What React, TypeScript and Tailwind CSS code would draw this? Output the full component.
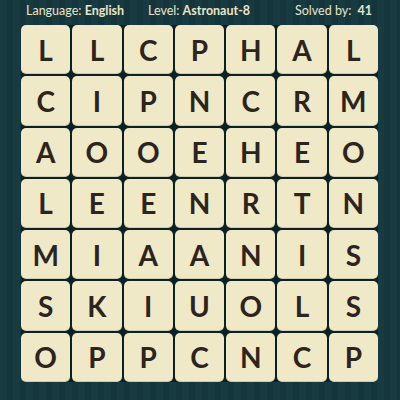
import React from "react";

const rows = [
  "LLCPHAL",
  "CIPNCRM",
  "AOOEHEO",
  "LEENRTN",
  "MIAANIS",
  "SKIUOLS",
  "OPPCNCP",
];

export default function App() {
  return (
    <div
      className="w-[400px] h-[400px] overflow-hidden bg-[repeating-linear-gradient(90deg,#173b41_0px,#173b41_7px,#14353b_7px,#14353b_13px)]"
      style={{ fontFamily: "Lato, 'Noto Sans', sans-serif" }}
    >
      <div className="h-[25px] flex items-center pl-[26px] pr-[28px] text-[12.5px] text-[#ebe4c8] leading-none pb-[2px]">
        <span className="w-[122px]">
          Language: <span className="font-bold">English</span>
        </span>
        <span>
          Level: <span className="font-bold">Astronaut-8</span>
        </span>
        <span className="ml-auto">
          Solved by: <span className="font-bold ml-[3px]">41</span>
        </span>
      </div>
      <div className="ml-[21px] w-[357px] h-[357px] bg-[#0b2126] rounded-[5px] grid grid-cols-7 grid-rows-7 gap-[2px]">
        {rows.flatMap((row, r) =>
          row.split("").map((ch, c) => (
            <div
              key={`${r}-${c}`}
              className="rounded-[5px] bg-[#f0e9c7] flex items-center justify-center text-[28px] font-bold text-[#2b241f] shadow-[inset_0_-1px_0_rgba(0,0,0,0.12)]"
            >
              {ch}
            </div>
          ))
        )}
      </div>
    </div>
  );
}
